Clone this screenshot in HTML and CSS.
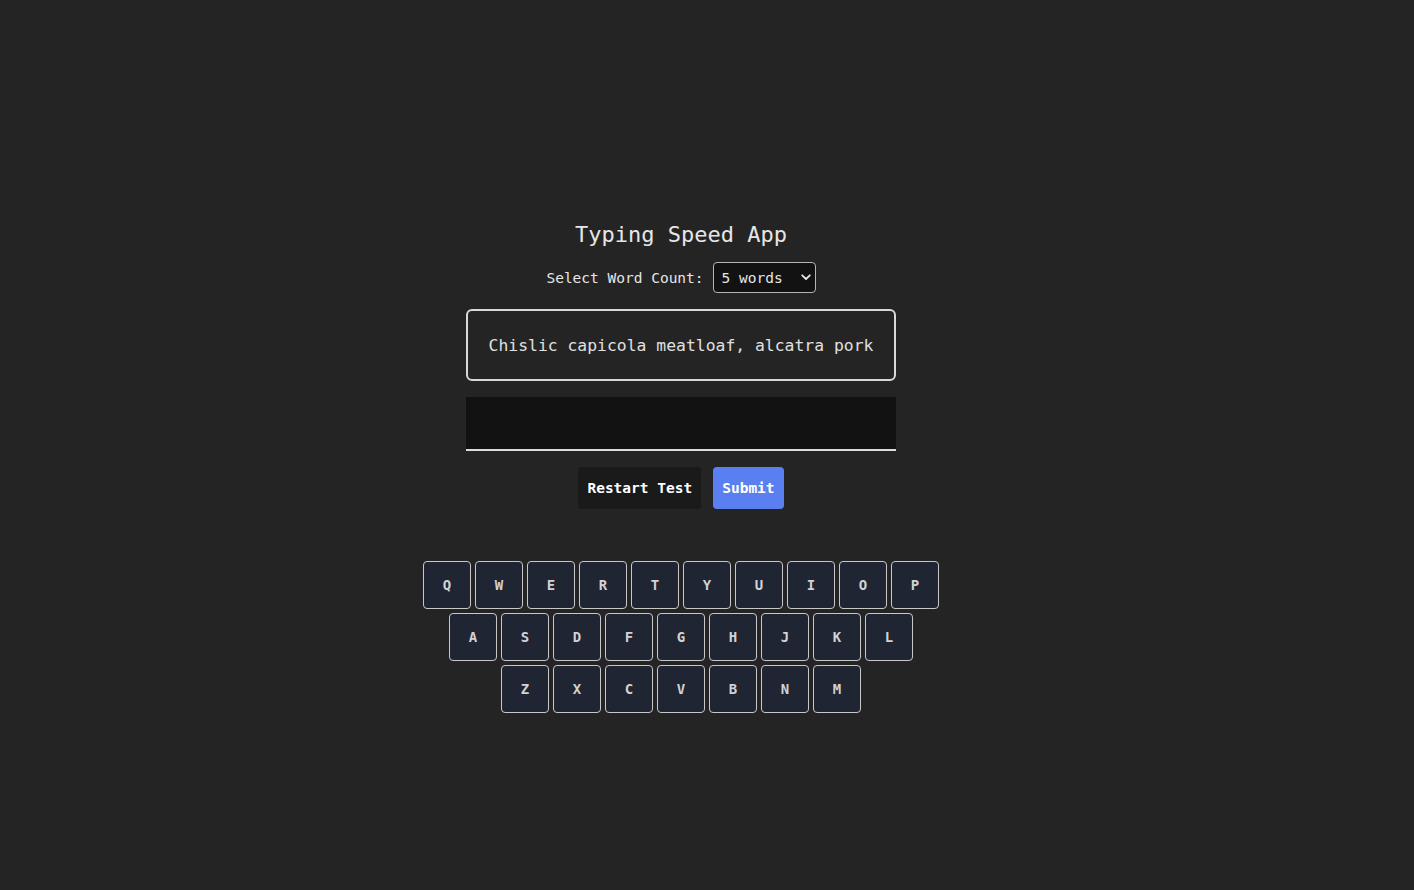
FILE: index.html
```html
<!DOCTYPE html>
<html lang="en">
<head>
<meta charset="utf-8">
<title>Typing Speed App</title>
<link rel="stylesheet" href="styles.css">
</head>
<body>
<main class="page">
  <h1 class="title">Typing Speed App</h1>
  <div class="count-row">
    <label class="count-label" for="count">Select Word Count:</label>
    <div class="select-wrap">
      <select id="count" class="count-select">
        <option>5 words</option>
        <option>10 words</option>
        <option>25 words</option>
      </select>
      <svg class="chevron" width="10" height="7" viewBox="0 0 10 7"><path d="M1.2 1.3 L5 5 L8.8 1.3" fill="none" stroke="#e6e6e6" stroke-width="1.8" stroke-linecap="round" stroke-linejoin="round"/></svg>
    </div>
  </div>
  <div class="prompt">Chislic capicola meatloaf, alcatra pork</div>
  <input class="typing" type="text">
  <div class="actions">
    <button class="btn btn-dark">Restart Test</button>
    <button class="btn btn-blue">Submit</button>
  </div>
  <div class="keyboard">
    <div class="krow">
      <span class="key">Q</span><span class="key">W</span><span class="key">E</span><span class="key">R</span><span class="key">T</span><span class="key">Y</span><span class="key">U</span><span class="key">I</span><span class="key">O</span><span class="key">P</span>
    </div>
    <div class="krow">
      <span class="key">A</span><span class="key">S</span><span class="key">D</span><span class="key">F</span><span class="key">G</span><span class="key">H</span><span class="key">J</span><span class="key">K</span><span class="key">L</span>
    </div>
    <div class="krow">
      <span class="key">Z</span><span class="key">X</span><span class="key">C</span><span class="key">V</span><span class="key">B</span><span class="key">N</span><span class="key">M</span>
    </div>
  </div>
</main>
</body>
</html>
```

FILE: styles.css
```css
html, body {
  margin: 0;
  padding: 0;
  background: #242424;
  height: 100%;
}
body {
  font-family: "DejaVu Sans Mono", "Liberation Mono", monospace;
  color: #e0e0e0;
}
.page {
  display: flex;
  flex-direction: column;
  align-items: center;
  padding: 220px 52px 0 0;
}
.title {
  margin: 0;
  font-size: 22px;
  font-weight: 500;
  line-height: 30px;
  color: #e6e6e6;
}
.count-row {
  margin-top: 12px;
  display: flex;
  align-items: center;
  gap: 9px;
}
.count-label {
  font-size: 14.5px;
  color: #e6e6e6;
}
.select-wrap {
  position: relative;
}
.count-select {
  appearance: none;
  -webkit-appearance: none;
  width: 103px;
  height: 31px;
  box-sizing: border-box;
  background: #121212;
  color: #e6e6e6;
  border: 1px solid #b5b5b5;
  border-radius: 4px;
  padding: 0 0 0 8px;
  font-family: inherit;
  font-size: 14.5px;
  outline: none;
}
.chevron {
  position: absolute;
  right: 5px;
  top: 12px;
  pointer-events: none;
}
.prompt {
  margin-top: 16px;
  width: 430px;
  height: 72px;
  box-sizing: border-box;
  border: 2px solid #d8d8d8;
  border-radius: 6px;
  display: flex;
  align-items: center;
  justify-content: center;
  font-size: 16.4px;
  color: #e0e0e0;
  white-space: nowrap;
}
.typing {
  margin-top: 16px;
  width: 430px;
  height: 54px;
  box-sizing: border-box;
  background: #121212;
  border: none;
  border-bottom: 2px solid #dcdcdc;
  color: #e0e0e0;
  font-family: inherit;
  font-size: 16px;
  outline: none;
  padding: 0 12px;
}
.actions {
  margin-top: 16px;
  display: flex;
  gap: 12px;
}
.btn {
  height: 42px;
  padding: 0 9px;
  border: none;
  border-radius: 4px;
  font-family: inherit;
  font-size: 14.5px;
  font-weight: bold;
  color: #ffffff;
  cursor: pointer;
}
.btn-dark {
  background: #1a1a1a;
}
.btn-blue {
  background: #5a7ff0;
}
.keyboard {
  margin-top: 52px;
  display: flex;
  flex-direction: column;
  align-items: center;
  gap: 4px;
}
.krow {
  display: flex;
  gap: 4px;
}
.key {
  width: 48px;
  height: 48px;
  box-sizing: border-box;
  border: 1px solid #c8c8c8;
  border-radius: 4px;
  background: #1f2533;
  color: #d2d2d2;
  display: flex;
  align-items: center;
  justify-content: center;
  font-size: 14px;
  font-weight: bold;
}
```
